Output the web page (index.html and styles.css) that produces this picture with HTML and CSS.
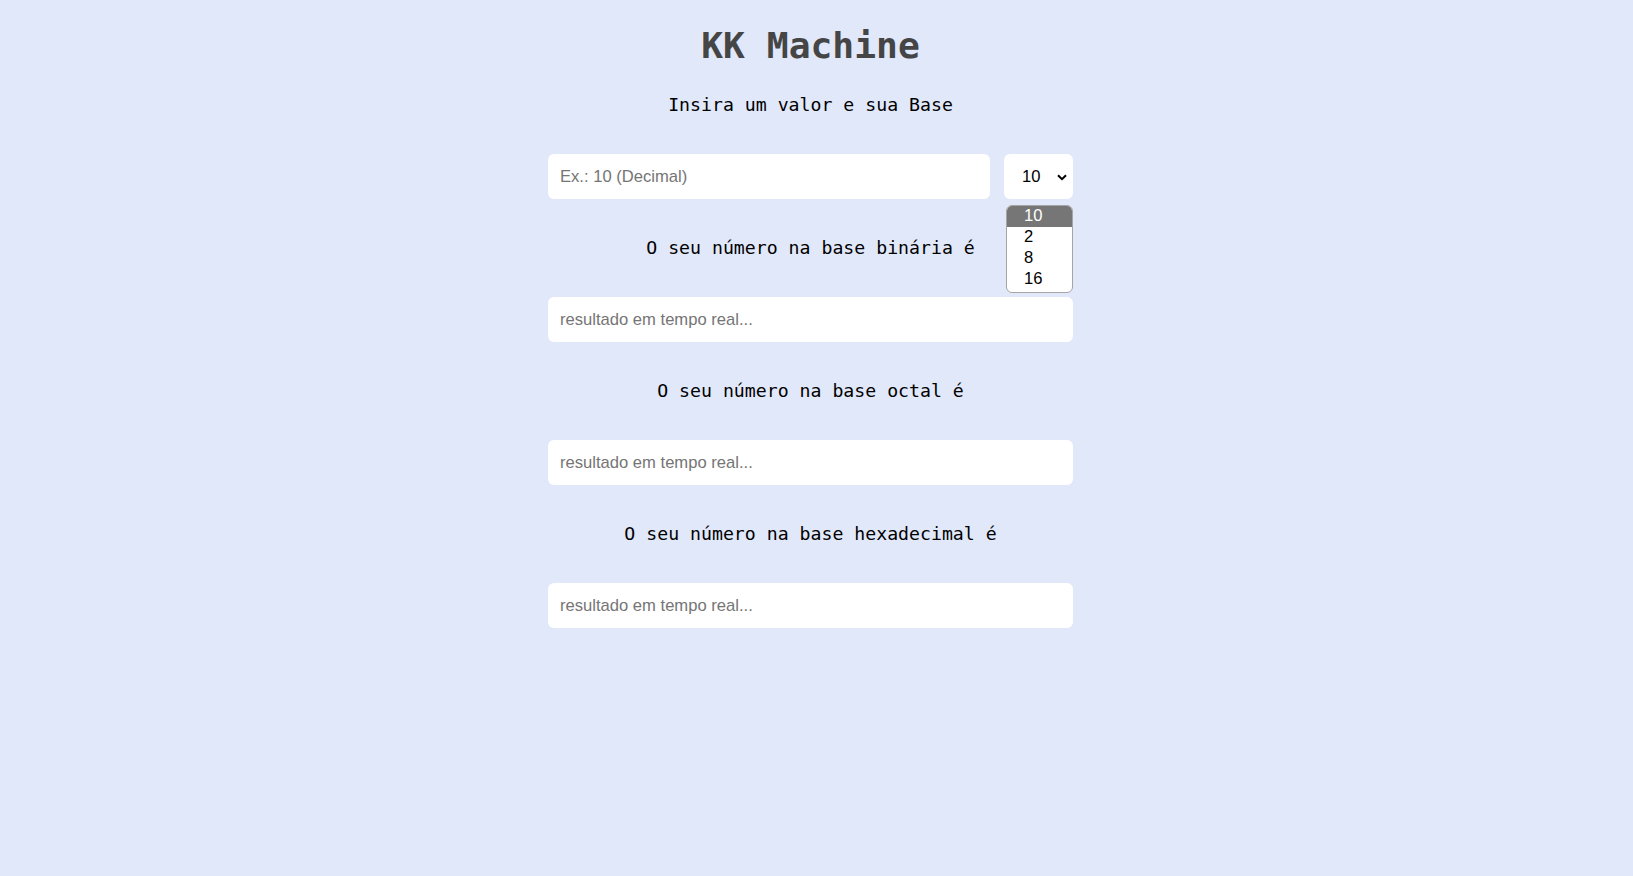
FILE: index.html
```html
<!DOCTYPE html>
<html lang="pt-BR">
<head>
<meta charset="utf-8">
<title>KK Machine</title>
<link rel="stylesheet" href="styles.css">
</head>
<body>
<div class="page">
  <header class="header">
    <h1 class="title">KK Machine</h1>
    <p class="subtitle">Insira um valor e sua Base</p>
  </header>
  <main class="converter">
    <div class="input-row">
      <input class="field field-main" type="text" placeholder="Ex.: 10 (Decimal)">
      <div class="select">
        <span class="select-value">10</span>
        <svg class="chevron" width="10" height="7" viewBox="0 0 10 7"><polyline points="1,1.2 5,5.2 9,1.2" fill="none" stroke="#000" stroke-width="2"/></svg>
      </div>
      <ul class="dropdown">
        <li class="option selected">10</li>
        <li class="option">2</li>
        <li class="option">8</li>
        <li class="option">16</li>
      </ul>
    </div>
    <p class="label">O seu número na base binária é</p>
    <input class="field" type="text" placeholder="resultado em tempo real...">
    <p class="label">O seu número na base octal é</p>
    <input class="field" type="text" placeholder="resultado em tempo real...">
    <p class="label">O seu número na base hexadecimal é</p>
    <input class="field" type="text" placeholder="resultado em tempo real...">
  </main>
</div>
</body>
</html>
```
FILE: styles.css
```css
html, body {
  margin: 0;
  padding: 0;
  background: #e1e8fa;
}
body {
  min-height: 876px;
  padding-right: 12px;
  box-sizing: border-box;
}
.page {
  width: 525px;
  margin: 0 auto;
  padding-top: 25px;
  font-family: "DejaVu Sans Mono", monospace;
}
.header {
  display: flex;
  flex-direction: column;
  align-items: center;
}
.title {
  margin: 0;
  font-size: 36.3px;
  line-height: 42px;
  font-weight: bold;
  color: #454545;
}
.subtitle {
  margin: 27px 0 0;
  font-size: 18.2px;
  line-height: 22px;
  color: #000;
}
.converter {
  margin-top: 38px;
  display: flex;
  flex-direction: column;
  gap: 38px;
}
.input-row {
  position: relative;
  display: flex;
  gap: 14px;
}
.field {
  display: block;
  box-sizing: border-box;
  width: 100%;
  height: 45px;
  margin: 0;
  border: none;
  border-radius: 6px;
  background: #fff;
  padding: 0 12px;
  font-family: "Liberation Sans", Arial, sans-serif;
  font-size: 16.6px;
  color: #000;
  outline: none;
}
.field::placeholder {
  color: #757575;
}
.field-main {
  flex: 1;
  width: auto;
  min-width: 0;
}
.select {
  box-sizing: border-box;
  width: 69px;
  height: 45px;
  flex: none;
  background: #fff;
  border-radius: 6px;
  display: flex;
  align-items: center;
  padding-left: 18px;
  padding-right: 6px;
  font-family: "Liberation Sans", Arial, sans-serif;
  font-size: 16.6px;
  color: #000;
}
.select-value {
  flex: 1;
}
.chevron {
  display: block;
  margin-top: 2px;
}
.dropdown {
  position: absolute;
  left: 458px;
  top: 51px;
  width: 67px;
  box-sizing: border-box;
  margin: 0;
  padding: 0 0 2px;
  list-style: none;
  background: #fff;
  border: 1px solid #a5a5a5;
  border-radius: 6px;
  overflow: hidden;
  font-family: "Liberation Sans", Arial, sans-serif;
  font-size: 16.6px;
  z-index: 2;
}
.option {
  height: 21px;
  line-height: 20px;
  padding-left: 17px;
  color: #000;
}
.option.selected {
  background: #767676;
  color: #fff;
}
.label {
  margin: 0;
  font-size: 18.2px;
  line-height: 22px;
  text-align: center;
  color: #000;
}
```
